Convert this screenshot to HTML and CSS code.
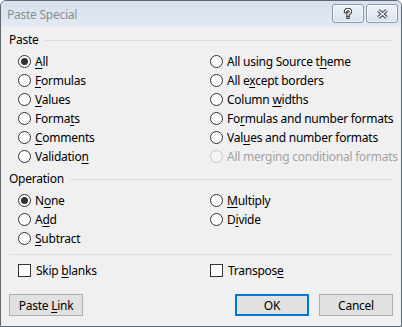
FILE: index.html
```html
<!DOCTYPE html>
<html lang="en">
<head>
    <meta charset="UTF-8">
    <title>Paste Special</title>
    <link rel="stylesheet" href="styles.css">
</head>
<body>
    <div id="dialog">
        <div class="titlebar">
            <span class="title">Paste Special</span>
            <div class="caption-btns">
                <span class="cap-btn">
                    <svg width="10" height="11" viewBox="0 0 10 11">
                        <path d="M2.5 3.5 Q2.5 1.5 5 1.5 Q7.5 1.5 7.5 3.5 Q7.5 5 5 6 L5 7" fill="none" stroke="#3c3c3c" stroke-width="3.4" stroke-linecap="square"/>
                        <path d="M2.5 3.5 Q2.5 1.5 5 1.5 Q7.5 1.5 7.5 3.5 Q7.5 5 5 6 L5 7" fill="none" stroke="#fff" stroke-width="1.4" stroke-linecap="square"/>
                        <rect x="3.3" y="8" width="3.4" height="3" fill="#3c3c3c"/>
                        <rect x="4.3" y="9" width="1.4" height="1" fill="#fff"/>
                    </svg>
                </span>
                <span class="cap-btn">
                    <svg width="13" height="10" viewBox="0 0 13 10">
                        <path d="M2.5 1.5 L10.5 8.5 M10.5 1.5 L2.5 8.5" stroke="#3c3c3c" stroke-width="3.6"/>
                        <path d="M2.5 1.5 L10.5 8.5 M10.5 1.5 L2.5 8.5" stroke="#fff" stroke-width="1.4"/>
                    </svg>
                </span>
            </div>
        </div>

        <div class="content">
            <div class="group-head"><span>Paste</span><i></i></div>
            <div class="opts">
                <label class="opt"><b class="radio on"></b><span><u>A</u>ll</span></label>
                <label class="opt"><b class="radio"></b><span>All using Source t<u>h</u>eme</span></label>
                <label class="opt"><b class="radio"></b><span><u>F</u>ormulas</span></label>
                <label class="opt"><b class="radio"></b><span>All e<u>x</u>cept borders</span></label>
                <label class="opt"><b class="radio"></b><span><u>V</u>alues</span></label>
                <label class="opt"><b class="radio"></b><span>Column <u>w</u>idths</span></label>
                <label class="opt"><b class="radio"></b><span>Forma<u>t</u>s</span></label>
                <label class="opt"><b class="radio"></b><span>Fo<u>r</u>mulas and number formats</span></label>
                <label class="opt"><b class="radio"></b><span><u>C</u>omments</span></label>
                <label class="opt"><b class="radio"></b><span>Val<u>u</u>es and number formats</span></label>
                <label class="opt"><b class="radio"></b><span>Validatio<u>n</u></span></label>
                <label class="opt disabled"><b class="radio"></b><span>All merging conditional formats</span></label>
            </div>

            <div class="group-head op-head"><span>Operation</span><i></i></div>
            <div class="opts">
                <label class="opt"><b class="radio on"></b><span>N<u>o</u>ne</span></label>
                <label class="opt"><b class="radio"></b><span><u>M</u>ultiply</span></label>
                <label class="opt"><b class="radio"></b><span>A<u>d</u>d</span></label>
                <label class="opt"><b class="radio"></b><span>D<u>i</u>vide</span></label>
                <label class="opt"><b class="radio"></b><span><u>S</u>ubtract</span></label>
            </div>

            <div class="sep"></div>
            <div class="opts checks">
                <label class="opt"><b class="check"></b><span>Skip <u>b</u>lanks</span></label>
                <label class="opt"><b class="check"></b><span>Transpos<u>e</u></span></label>
            </div>

            <div class="buttons">
                <button class="btn">Paste <u>L</u>ink</button>
                <span class="spacer"></span>
                <button class="btn default">OK</button>
                <button class="btn">Cancel</button>
            </div>
        </div>
    </div>
</body>
</html>
```

FILE: styles.css
```css
*{
    margin: 0;
    padding: 0;
    box-sizing: border-box;
}
body{
    font-family: "Segoe UI", "Noto Sans", sans-serif;
    font-size: 12px;
    letter-spacing: -0.25px;
    color: #000;
    background: #fff;
}
#dialog{
    width: 402px;
    height: 327px;
    border: 1px solid #5f6770;
    border-radius: 6px 6px 0 0;
    background: #f0f0f0;
    overflow: hidden;
    display: flex;
    flex-direction: column;
}
/* title bar */
.titlebar{
    height: 25px;
    flex: none;
    display: flex;
    align-items: flex-start;
    padding: 0 3px 0 6px;
    background: linear-gradient(#d7e2ee, #e2e9f2);
}
.title{
    color: #8a8f96;
    line-height: 16px;
    margin-top: 6px;
}
.caption-btns{
    margin-left: auto;
    margin-top: 3px;
    display: flex;
    gap: 2px;
}
.cap-btn{
    width: 32px;
    height: 19px;
    border: 1px solid #8a98a8;
    border-radius: 3px;
    background: linear-gradient(#eef3f8, #d9e2ec);
    box-shadow: inset 0 0 0 1px rgba(255,255,255,0.6);
    display: flex;
    align-items: center;
    justify-content: center;
}
/* body */
.content{
    flex: 1;
    padding: 6px 8px 0 8px;
    display: flex;
    flex-direction: column;
}
.group-head{
    display: flex;
    align-items: center;
    gap: 6px;
    line-height: 16px;
}
.group-head i{
    flex: 1;
    height: 1px;
    background: #dcdcdc;
}
.op-head{
    margin-top: 5px;
}
.opts{
    display: grid;
    grid-template-columns: 192px 1fr;
    grid-auto-rows: 19px;
    padding-left: 9px;
    margin-top: 4px;
}
.opt{
    display: flex;
    align-items: center;
    white-space: nowrap;
}
.opt u{
    text-decoration-thickness: 1px;
    text-underline-offset: 2px;
}
.radio{
    flex: none;
    width: 13px;
    height: 13px;
    border: 1px solid #333;
    border-radius: 50%;
    background: #fff;
    margin-right: 4px;
    display: flex;
    align-items: center;
    justify-content: center;
}
.radio.on::after{
    content: "";
    width: 7px;
    height: 7px;
    border-radius: 50%;
    background: #333;
}
.disabled{
    color: #a3a3a3;
}
.disabled .radio{
    border-color: #c4c4c4;
    background: #f4f4f4;
}
.check{
    flex: none;
    width: 13px;
    height: 13px;
    border: 1px solid #333;
    background: #fff;
    margin-right: 5px;
}
.sep{
    height: 1px;
    background: #dcdcdc;
    margin-top: 6px;
}
.checks{
    margin-top: 6px;
}
.buttons{
    display: flex;
    margin-top: 14px;
    gap: 10px;
}
.spacer{
    flex: 1;
}
.btn{
    font: inherit;
    letter-spacing: inherit;
    color: #000;
    width: 74px;
    height: 22px;
    border: 1px solid #adadad;
    background: #e1e1e1;
}
.btn u{
    text-underline-offset: 2px;
}
.btn.default{
    border: 2px solid #0078d7;
}
```
